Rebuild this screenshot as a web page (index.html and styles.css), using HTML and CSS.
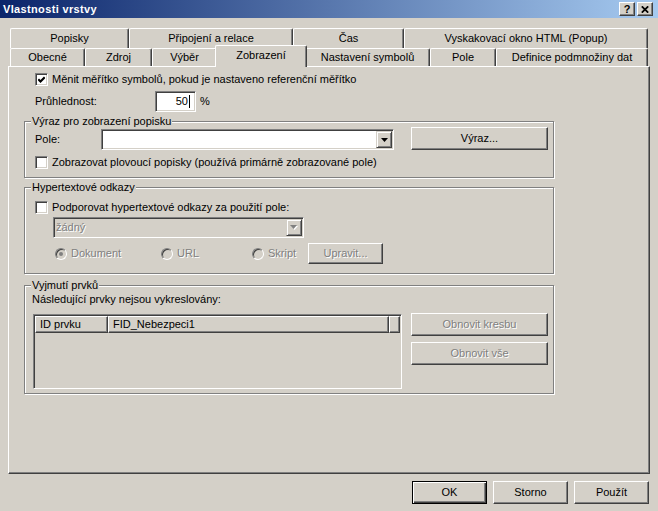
FILE: index.html
```html
<!DOCTYPE html>
<html lang="cs">
<head>
<meta charset="utf-8">
<title>Vlastnosti vrstvy</title>
<link rel="stylesheet" href="styles.css">
</head>
<body>
<div class="titlebar">
  <span class="title">Vlastnosti vrstvy</span>
  <div class="caption-btns">
    <span class="cbtn help">?</span>
    <span class="cbtn close"><svg width="8" height="7" viewBox="0 0 8 7"><path d="M0.8 0.3 L7.2 6.7 M7.2 0.3 L0.8 6.7" stroke="#000" stroke-width="1.7" fill="none"/></svg></span>
  </div>
</div>

<div class="tabs">
  <div class="tabrow back">
    <div class="tab t-popisky">Popisky</div>
    <div class="tab t-pripojeni">Připojení a relace</div>
    <div class="tab t-cas">Čas</div>
    <div class="tab t-popup">Vyskakovací okno HTML (Popup)</div>
  </div>
  <div class="tabrow front">
    <div class="tab t-obecne">Obecné</div>
    <div class="tab t-zdroj">Zdroj</div>
    <div class="tab t-vyber">Výběr</div>
    <div class="tab t-zobrazeni active">Zobrazení</div>
    <div class="tab t-symboly">Nastavení symbolů</div>
    <div class="tab t-pole">Pole</div>
    <div class="tab t-definice">Definice podmnožiny dat</div>
  </div>
</div>

<div class="panel">
  <div class="line row-scale">
    <span class="check"><svg width="7" height="7" viewBox="0 0 7 7"><path d="M0.3 3.3 L2.5 5.5 L6.7 1.3" stroke="#000" stroke-width="2.1" fill="none"/></svg></span>
    <span class="check-label">Měnit měřítko symbolů, pokud je nastaveno referenční měřítko</span>
  </div>

  <div class="line row-opacity">
    <span class="opacity-label">Průhlednost:</span>
    <span class="textbox"><span>50</span><span class="caret"></span></span>
    <span class="unit">%</span>
  </div>

  <div class="group group-label">
    <span class="legend">Výraz pro zobrazení popisku</span>
    <div class="line row-field">
      <span class="field-label">Pole:</span>
      <span class="combo">
        <span class="combo-text"></span>
        <span class="drop"><svg width="7" height="4" viewBox="0 0 7 4"><polygon points="0,0 7,0 3.5,4" fill="#000"/></svg></span>
      </span>
      <span class="btn btn-wide btn-expr">Výraz...</span>
    </div>
    <div class="line row-float">
      <span class="check"></span>
      <span class="check-label">Zobrazovat plovoucí popisky (používá primárně zobrazované pole)</span>
    </div>
  </div>

  <div class="group group-links">
    <span class="legend">Hypertextové odkazy</span>
    <div class="line row-support">
      <span class="check"></span>
      <span class="check-label">Podporovat hypertextové odkazy za použití pole:</span>
    </div>
    <span class="combo combo-disabled">
      <span class="combo-text disabled-text">žádný</span>
      <span class="drop"><svg width="8" height="5" viewBox="0 0 8 5"><polygon points="1,1 8,1 4.5,5" fill="#fff"/><polygon points="0,0 7,0 3.5,4" fill="#808080"/></svg></span>
    </span>
    <div class="line row-radios">
      <span class="radio-item ri-doc"><span class="radio"><span class="dot"></span></span><span class="disabled-text">Dokument</span></span>
      <span class="radio-item ri-url"><span class="radio"></span><span class="disabled-text">URL</span></span>
      <span class="radio-item ri-script"><span class="radio"></span><span class="disabled-text">Skript</span></span>
      <span class="btn btn-edit disabled-text">Upravit...</span>
    </div>
  </div>

  <div class="group group-exclude">
    <span class="legend">Vyjmutí prvků</span>
    <div class="exclude-note">Následující prvky nejsou vykreslovány:</div>
    <div class="line row-list">
      <div class="listview">
        <div class="list-header">
          <span class="col col-id">ID prvku</span>
          <span class="col col-fid">FID_Nebezpeci1</span>
          <span class="col col-rest"></span>
        </div>
      </div>
      <div class="list-buttons">
        <span class="btn btn-wide disabled-text">Obnovit kresbu</span>
        <span class="btn btn-wide disabled-text">Obnovit vše</span>
      </div>
    </div>
  </div>
</div>

<div class="footer">
  <span class="btn btn-dlg btn-default">OK</span>
  <span class="btn btn-dlg">Storno</span>
  <span class="btn btn-dlg">Použít</span>
</div>
</body>
</html>
```

FILE: styles.css
```css
* { box-sizing: border-box; }
html, body { margin: 0; padding: 0; }
body {
  width: 658px;
  height: 511px;
  overflow: hidden;
  background: #D4D0C8;
  font-family: "Liberation Sans", Arial, sans-serif;
  font-size: 11px;
  line-height: 13px;
  color: #000;
}

/* ---------- title bar ---------- */
.titlebar {
  height: 18px;
  display: flex;
  align-items: center;
  padding: 0 5px 0 3px;
  background: linear-gradient(to right, #0A246A, #A6CAF0);
}
.title {
  color: #fff;
  font-weight: bold;
  letter-spacing: 0.35px;
}
.caption-btns {
  margin-left: auto;
  display: flex;
  gap: 2px;
}
.cbtn {
  width: 16px;
  height: 14px;
  background: #D4D0C8;
  border: 1px solid;
  border-color: #fff #404040 #404040 #fff;
  box-shadow: inset -1px -1px #808080;
  display: flex;
  align-items: center;
  justify-content: center;
}
.cbtn.help {
  font-weight: bold;
  font-size: 11px;
  line-height: 11px;
  padding-top: 1px;
}

/* ---------- tabs ---------- */
.tabs {
  margin-top: 10px;
  padding-left: 10px;
}
.tabrow { display: flex; align-items: flex-start; }
.tabrow.back { height: 20px; }
.tabrow.front { height: 18px; }
.tab {
  flex: none;
  background: #D4D0C8;
  border: 1px solid;
  border-bottom: 0;
  border-color: #fff #404040 #fff #fff;
  border-radius: 2px 2px 0 0;
  box-shadow: inset -1px 0 #808080;
  display: flex;
  align-items: center;
  justify-content: center;
  white-space: nowrap;
}
.back .tab { height: 20px; }
.front .tab { height: 18px; }
.tab.active {
  height: 22px;
  margin: -3px -2px 0 -2px;
  padding-bottom: 3px;
  z-index: 2;
}
.t-popisky { width: 119px; }
.t-pripojeni { width: 164px; }
.t-cas { width: 111px; }
.t-popup { width: 244px; }
.t-obecne { width: 75px; }
.t-zdroj { width: 67px; }
.t-vyber { width: 65px; }
.t-zobrazeni { width: 92px; }
.t-symboly { width: 125px; }
.t-pole { width: 66px; }
.t-definice { width: 152px; }

/* ---------- panel ---------- */
.panel {
  margin: 0 8px;
  height: 408px;
  border: 1px solid;
  border-color: #fff #404040 #404040 #fff;
  box-shadow: inset -1px -1px #808080;
  padding: 6px 0 0 15px;
}
.line { display: flex; align-items: center; }

.check {
  flex: none;
  width: 13px;
  height: 13px;
  background: #fff;
  border: 1px solid;
  border-color: #808080 #fff #fff #808080;
  box-shadow: inset 1px 1px #404040, inset -1px -1px #D4D0C8;
  display: flex;
  align-items: center;
  justify-content: center;
}
.check-label { margin-left: 4px; white-space: nowrap; }

.row-scale { margin-left: 11px; height: 13px; }

.row-opacity { margin: 5px 0 0 11px; height: 21px; }
.opacity-label { width: 120px; }
.textbox {
  width: 41px;
  height: 21px;
  background: #fff;
  border: 1px solid;
  border-color: #808080 #fff #fff #808080;
  box-shadow: inset 1px 1px #404040, inset -1px -1px #D4D0C8;
  display: flex;
  align-items: center;
  justify-content: flex-end;
  padding-right: 5px;
}
.caret {
  width: 1px;
  height: 13px;
  background: #000;
  margin-left: 1px;
}
.unit { margin-left: 4px; }

/* ---------- group boxes ---------- */
.group {
  width: 530px;
  border: 1px solid #808080;
  box-shadow: inset 1px 1px #fff, 1px 1px #fff;
}
.legend {
  display: block;
  width: max-content;
  height: 12px;
  line-height: 12px;
  margin: -7px 0 0 6px;
  padding: 0 1px;
  background: #D4D0C8;
}
.group-label { margin-top: 9px; padding-bottom: 8px; }
.group-links { margin-top: 9px; padding-bottom: 9px; }
.group-exclude { margin-top: 11px; padding-bottom: 4px; }

.row-field {
  align-items: flex-end;
  padding-left: 10px;
  height: 23px;
}
.field-label { width: 66px; line-height: 21px; }
.combo {
  width: 293px;
  height: 21px;
  padding: 1px;
  background: #fff;
  border: 1px solid;
  border-color: #808080 #fff #fff #808080;
  box-shadow: inset 1px 1px #404040, inset -1px -1px #D4D0C8;
  display: flex;
  align-items: stretch;
}
.combo-text {
  flex: 1;
  padding-left: 2px;
  line-height: 17px;
}
.drop {
  width: 16px;
  background: #D4D0C8;
  border: 1px solid;
  border-color: #D4D0C8 #404040 #404040 #D4D0C8;
  box-shadow: inset 1px 1px #fff, inset -1px -1px #808080;
  display: flex;
  align-items: center;
  justify-content: center;
}
.btn {
  flex: none;
  background: #D4D0C8;
  border: 1px solid;
  border-color: #fff #404040 #404040 #fff;
  box-shadow: inset -1px -1px #808080;
  display: flex;
  align-items: center;
  justify-content: center;
  white-space: nowrap;
}
.btn-wide { width: 137px; height: 23px; }
.btn-expr { margin-left: 17px; }

.row-float { margin: 6px 0 0 10px; }

.row-support { margin: 8px 0 0 10px; }
.combo-disabled {
  margin: 3px 0 0 28px;
  width: 251px;
  background: #D4D0C8;
}
.combo-disabled .combo-text { padding-left: 1px; }
.disabled-text { color: #808080; text-shadow: 1px 1px 0 #fff; }

.row-radios { margin-top: 5px; height: 21px; }
.radio-item { display: flex; align-items: center; }
.ri-doc { margin-left: 30px; width: 106px; }
.ri-url { width: 91px; }
.ri-script { width: 56px; }
.radio {
  flex: none;
  width: 12px;
  height: 12px;
  margin-right: 4px;
  border-radius: 50%;
  background: #D4D0C8;
  border: 1px solid;
  border-color: #808080 #fff #fff #808080;
  box-shadow: inset 1px 1px #404040, inset -1px -1px #D4D0C8;
  display: flex;
  align-items: center;
  justify-content: center;
}
.dot {
  width: 4px;
  height: 4px;
  border-radius: 50%;
  background: #808080;
}
.btn-edit { width: 75px; height: 21px; }

.exclude-note { margin: 2px 0 0 7px; }
.row-list { align-items: flex-start; margin-top: 7px; }
.listview {
  margin: 1px 0 0 8px;
  width: 369px;
  height: 75px;
  padding: 1px;
  border: 1px solid;
  border-color: #808080 #fff #fff #808080;
  box-shadow: inset 1px 1px #404040, inset -1px -1px #D4D0C8;
}
.list-header { display: flex; height: 17px; }
.col {
  height: 17px;
  border: 1px solid;
  border-color: #fff #404040 #404040 #fff;
  box-shadow: inset -1px -1px #808080;
  padding-left: 4px;
  line-height: 14px;
  white-space: nowrap;
}
.col-id { width: 73px; }
.col-fid { width: 281px; }
.col-rest { width: 11px; }
.list-buttons {
  margin-left: 9px;
  display: flex;
  flex-direction: column;
  gap: 6px;
}

/* ---------- footer ---------- */
.footer {
  display: flex;
  justify-content: flex-end;
  gap: 6px;
  padding: 7px 9px 0 0;
}
.btn-dlg { width: 75px; height: 23px; }
.btn-default {
  border-color: #000;
  box-shadow: inset 1px 1px #fff, inset -1px -1px #404040, inset -2px -2px #808080;
}
```
